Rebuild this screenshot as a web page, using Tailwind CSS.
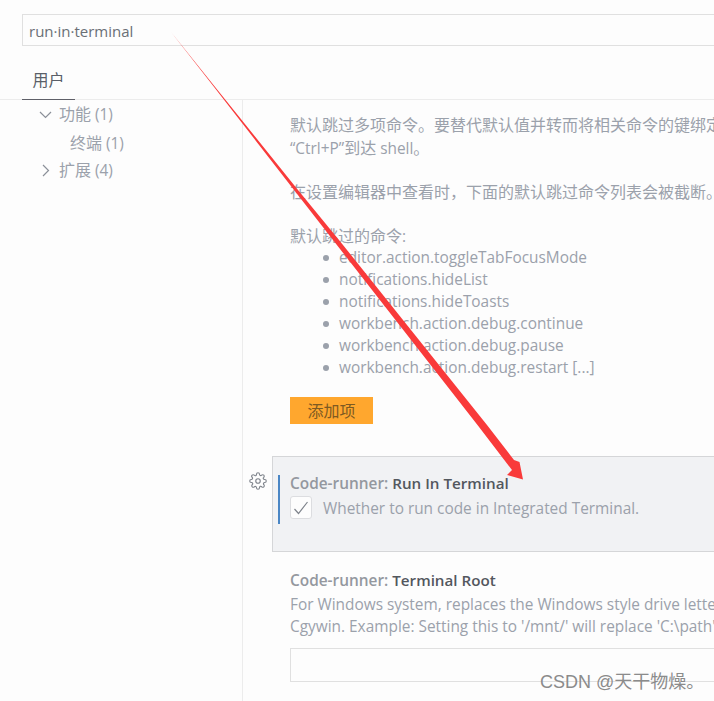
<!DOCTYPE html>
<html lang="en">
<head>
     <meta charset="UTF-8">
     <title>Settings</title>
     <script src="https://cdn.jsdelivr.net/npm/@tailwindcss/browser@4"></script>
</head>
<body class="relative w-[714px] h-[701px] overflow-hidden bg-[#fdfdfd] font-['Open_Sans','Noto_Sans_CJK_SC',sans-serif] text-[15.4px] text-[#9ba1ab]">
     <!-- search + tabs -->
     <div class="pl-[22px] pt-[14px]">
          <div class="h-[32px] border border-[#e0e0e0] border-r-0 pl-[6px] text-[15px] leading-[33px] text-[#6a6f76]">run·in·terminal</div>
     </div>
     <div class="mt-[20px] h-[34px] border-b border-[#ececec] pl-[22px]">
          <div class="w-[53px] h-[34px] border-b border-[#5f6068] text-center text-[16px] leading-[28px] text-[#5a5f68]">用户</div>
     </div>
     <div class="flex h-[601px]">
          <!-- sidebar -->
          <div class="w-[243px] shrink-0 border-r border-[#ececec] pt-[1px] leading-[27.5px]">
               <div class="flex items-center pl-[39px]">
                    <svg class="w-[13px] h-[13px] mr-[7px]" viewBox="0 0 13 13" fill="none" stroke="#8b9099" stroke-width="1.2"><path d="M1 4l5.5 5.5L12 4"/></svg>
                    <span><span class="text-[16px]">功能</span> (1)</span>
               </div>
               <div class="pl-[70px] mt-[1px]"><span class="text-[16px]">终端</span> (1)</div>
               <div class="flex items-center pl-[39px]">
                    <svg class="w-[13px] h-[13px] mr-[7px]" viewBox="0 0 13 13" fill="none" stroke="#8b9099" stroke-width="1.2"><path d="M4 1l5.5 5.5L4 12"/></svg>
                    <span><span class="text-[16px]">扩展</span> (4)</span>
               </div>
          </div>
          <!-- settings list -->
          <div class="flex-1 min-w-0 overflow-hidden whitespace-nowrap leading-[22px]">
               <div class="pl-[47px] pt-[14px]">
                    <p class="text-[16px]">默认跳过多项命令。要替代默认值并转而将相关命令的键绑定发送到 shell，请使用此设置。</p>
                    <p class="mt-[1px] h-[22px]">“Ctrl+P”<span class="text-[16px]">到达</span> shell<span class="text-[16px]">。</span></p>
                    <p class="mt-[22px] text-[16px]">在设置编辑器中查看时，下面的默认跳过命令列表会被截断。</p>
                    <p class="mt-[22px] h-[22px]"><span class="text-[16px]">默认跳过的命令</span>:</p>
                    <ul class="pl-[49px]">
                         <li class="relative before:content-[''] before:absolute before:left-[-16px] before:top-[8px] before:w-[6px] before:h-[6px] before:rounded-full before:bg-[#9ba1ab]">editor.action.toggleTabFocusMode</li>
                         <li class="relative before:content-[''] before:absolute before:left-[-16px] before:top-[8px] before:w-[6px] before:h-[6px] before:rounded-full before:bg-[#9ba1ab]">notifications.hideList</li>
                         <li class="relative before:content-[''] before:absolute before:left-[-16px] before:top-[8px] before:w-[6px] before:h-[6px] before:rounded-full before:bg-[#9ba1ab]">notifications.hideToasts</li>
                         <li class="relative before:content-[''] before:absolute before:left-[-16px] before:top-[8px] before:w-[6px] before:h-[6px] before:rounded-full before:bg-[#9ba1ab]">workbench.action.debug.continue</li>
                         <li class="relative before:content-[''] before:absolute before:left-[-16px] before:top-[8px] before:w-[6px] before:h-[6px] before:rounded-full before:bg-[#9ba1ab]">workbench.action.debug.pause</li>
                         <li class="relative before:content-[''] before:absolute before:left-[-16px] before:top-[8px] before:w-[6px] before:h-[6px] before:rounded-full before:bg-[#9ba1ab]">workbench.action.debug.restart [...]</li>
                    </ul>
                    <div class="mt-[18px] w-[83px] h-[27px] bg-[#ffa72e] text-center text-[16px] leading-[29px] text-[#7d5a22]">添加项</div>
               </div>
               <!-- highlighted row -->
               <div class="relative mt-[32px] ml-[29px] h-[96px] border border-r-0 border-[#d5d6d8] bg-[#f1f2f4]">
                    <svg class="absolute left-[-24px] top-[15px] w-[18px] h-[18px]" viewBox="0 0 24 24" fill="none" stroke="#7e838b" stroke-width="1.5" stroke-linejoin="round"><circle cx="12" cy="12" r="3"/><path d="M19.4 15a1.65 1.65 0 0 0 .33 1.82l.06.06a2 2 0 1 1-2.83 2.83l-.06-.06a1.65 1.65 0 0 0-2.9 1.17V21a2 2 0 1 1-4 0v-.09a1.65 1.65 0 0 0-2.82-1.17l-.06.06a2 2 0 1 1-2.83-2.83l.06-.06A1.65 1.65 0 0 0 3.09 14H3a2 2 0 1 1 0-4h.09a1.65 1.65 0 0 0 1.17-2.82l-.06-.06a2 2 0 1 1 2.83-2.83l.06.06A1.65 1.65 0 0 0 10 3.09V3a2 2 0 1 1 4 0v.09a1.65 1.65 0 0 0 2.82 1.17l.06-.06a2 2 0 1 1 2.83 2.83l-.06.06A1.65 1.65 0 0 0 20.91 10H21a2 2 0 1 1 0 4h-.09a1.65 1.65 0 0 0-1.51 1z"/></svg>
                    <div class="absolute left-[5px] top-[18px] w-[2px] h-[49px] bg-[#4a86c5]"></div>
                    <div class="pl-[17px] pt-[15px]">
                         <p class="h-[23px] font-semibold"><span class="text-[#94989f]">Code-runner: </span><span class="text-[15.2px] text-[#53575e]">Run In Terminal</span></p>
                         <div class="mt-[1px] flex items-start">
                              <div class="w-[22px] h-[23px] rounded-[3px] border border-[#dcdde0] bg-[#fdfdfd] flex items-center justify-center">
                                   <svg class="w-[16px] h-[16px]" viewBox="0 0 16 16" fill="none" stroke="#7e838b" stroke-width="1.2"><path d="M1.5 9l4 4.5L14.5 2"/></svg>
                              </div>
                              <span class="ml-[11px] mt-[2px]">Whether to run code in Integrated Terminal.</span>
                         </div>
                    </div>
               </div>
               <!-- terminal root row -->
               <div class="pl-[47px] pt-[17px]">
                    <p class="h-[23px] font-semibold"><span class="text-[#94989f]">Code-runner: </span><span class="text-[15.2px] text-[#53575e]">Terminal Root</span></p>
                    <p class="mt-[2px]">For Windows system, replaces the Windows style drive letter with the Linux style for</p>
                    <p>Cgywin. Example: Setting this to '/mnt/' will replace 'C:\path' with '/mnt/c/path'</p>
                    <div class="mt-[10px] h-[34px] border border-r-0 border-[#e0e0e0]"></div>
               </div>
          </div>
     </div>
     <!-- annotation arrow drawn on the screenshot -->
     <svg class="absolute inset-0 pointer-events-none" width="714" height="701" viewBox="0 0 714 701"><polygon points="171,32 213.5,85 298,190 339,240 487,425 514,460 519.5,462 523,479.5 507,475 512,470 477.5,425 333,240 294,190 212.5,85" fill="#f93a3a"/></svg>
     <div class="absolute left-[540px] top-[670px] text-[18px] leading-[24px] text-[#8b8b8b] font-['Liberation_Sans','Noto_Sans_CJK_SC',sans-serif]">CSDN @天干物燥。</div>
</body>
</html>
